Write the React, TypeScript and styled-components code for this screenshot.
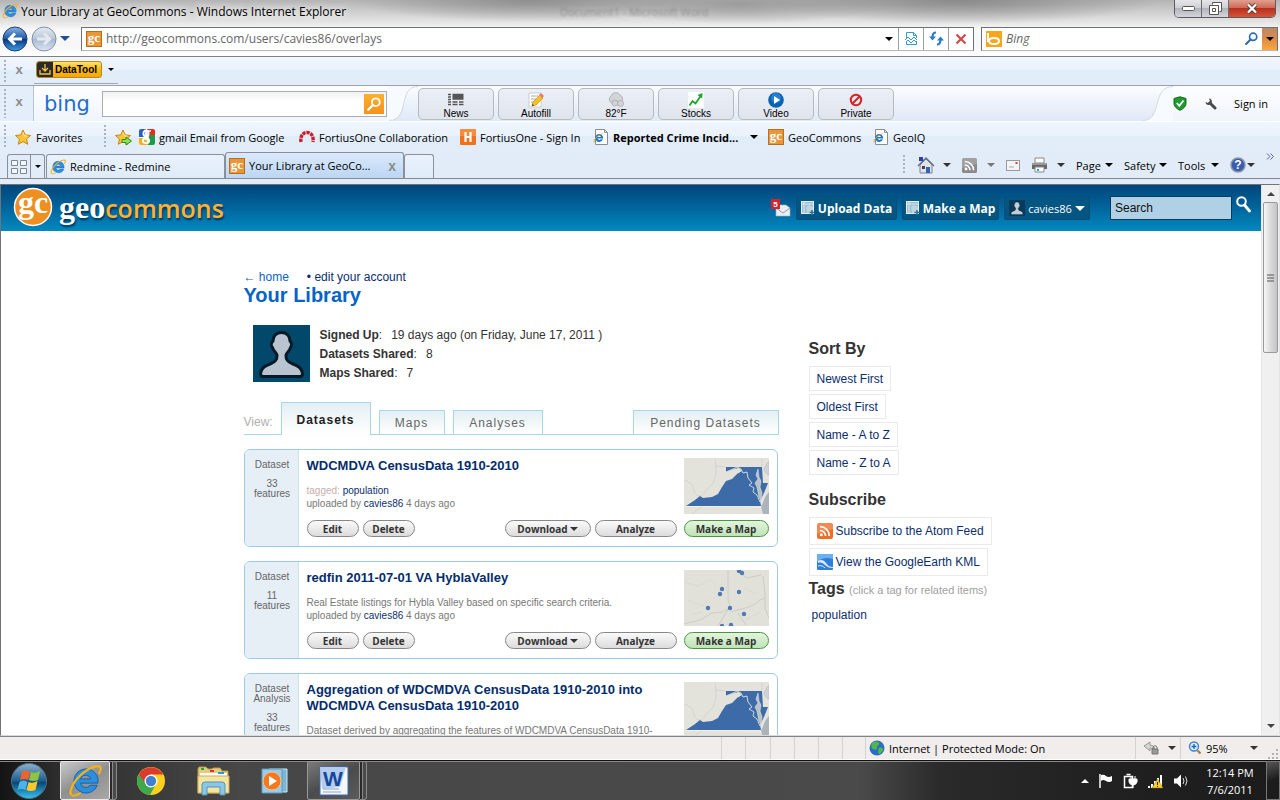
import React from "react";
import styled, { createGlobalStyle, css } from "styled-components";

const ui = `"Open Sans", "Noto Sans", sans-serif`;
const arial = `"Liberation Sans", Arial, sans-serif`;

const Global = createGlobalStyle`
  * { box-sizing: border-box; }
  html, body, #root { height: 100%; margin: 0; }
  body { font-family: ${ui}; font-size: 11px; overflow: hidden; }
  button, input { font: inherit; color: inherit; margin: 0; padding: 0; border: 0; background: none; }
  a { color: inherit; text-decoration: none; }
  h1, h2, h3, p, dl, dd { margin: 0; }
  svg { display: block; flex: none; }
`;

/* ---------- icons ---------- */

const Caret = styled.span<{ $color?: string; $size?: number }>`
  flex: none;
  width: 0;
  height: 0;
  border-left: ${(p) => p.$size ?? 4}px solid transparent;
  border-right: ${(p) => p.$size ?? 4}px solid transparent;
  border-top: ${(p) => p.$size ?? 4}px solid ${(p) => p.$color ?? "#000"};
`;

const IeIcon = ({ size = 16 }: { size?: number }) => (
  <svg width={size} height={size} viewBox="0 0 16 16">
    <path fillRule="evenodd" d="M8.400 2.300a5.700 5.700 0 1 0 5.400 7.700h-3.400a2.500 2.500 0 0 1-4.500-1h8.200A5.700 5.700 0 0 0 8.400 2.300M5.900 7a2.600 2.600 0 0 1 4.900 0z" fill="#2b8fdd" stroke="#14599c" strokeWidth=".4" />
    <path d="M1.600 14.600C.2 13 2.500 8 7 4.300 11 1 14.800.4 15.300 1.700c.3.800-.2 2-.9 3" fill="none" stroke="#f2b21c" strokeWidth="1.100" />
    <path d="M1.600 14.600c1 .7 2.900 0 4.400-1" fill="none" stroke="#f2b21c" strokeWidth=".9" />
  </svg>
);

const IeDoc = () => (
  <svg width="16" height="16" viewBox="0 0 16 16">
    <path d="M2.500.5h9l3 3v12h-12z" fill="#fff" stroke="#8c8c8c" />
    <path d="M11.500.5v3h3" fill="none" stroke="#8c8c8c" />
    <path fillRule="evenodd" d="M6.200 5a4 4 0 1 0 3.800 5.300H7.700a2 2 0 0 1-3.300-.7h5.800A4 4 0 0 0 6.200 5M4.500 8a1.900 1.900 0 0 1 3.500 0z" fill="#1f78c8" />
    <path d="M1 13.500C.5 11 4 6.500 9.500 4.800" fill="none" stroke="#e8a51c" />
  </svg>
);

const GcIcon = () => (
  <svg width="16" height="16" viewBox="0 0 16 16">
    <rect x=".5" y=".5" width="15" height="15" fill="#e8963a" stroke="#b9701d" />
    <text x="8" y="11" textAnchor="middle" fontFamily="Liberation Serif, serif" fontWeight="700" fontSize="13" fill="#fff">gc</text>
  </svg>
);

const Star = ({ arrow }: { arrow?: boolean }) => (
  <svg width="17" height="17" viewBox="0 0 17 17">
    <path d="M8 1l2.200 4.900 5.300.6-4 3.500 1.200 5.300L8 12.600l-4.700 2.700 1.200-5.300-4-3.500 5.300-.6z" fill="#ffc62e" stroke="#c9821a" strokeLinejoin="round" />
    <path d="M8 3.500l1.300 3.200 3 .4" fill="none" stroke="#fff0a8" />
    {arrow && <path d="M7 10.500h4V8l5.500 4-5.500 4v-2.500H7z" fill="#8fe05a" stroke="#2f8f1c" />}
  </svg>
);

const GoogleIcon = () => (
  <svg width="16" height="16" viewBox="0 0 16 16">
    <rect width="16" height="16" rx="2" fill="#fff" />
    <path d="M8 0h6a2 2 0 0 1 2 2v4H9z" fill="#e8291c" />
    <path d="M10 6h6v8a2 2 0 0 1-2 2H9z" fill="#1c9a48" />
    <path d="M0 9h7l2 7H2a2 2 0 0 1-2-2z" fill="#f3b21c" />
    <path d="M0 2a2 2 0 0 1 2-2h5L5 8H0z" fill="#2a62c4" />
    <ellipse cx="7" cy="4.500" rx="2.600" ry="3" fill="none" stroke="#fff" strokeWidth="1.800" />
    <ellipse cx="7" cy="11.800" rx="3.200" ry="2.300" fill="none" stroke="#fff" strokeWidth="1.800" />
    <path d="M9 2h3" stroke="#fff" strokeWidth="1.500" />
  </svg>
);

const RedArc = () => (
  <svg width="16" height="16" viewBox="0 0 16 16">
    <path d="M2 13C1 7 4 3.500 8 3.500S15 7 14 13" fill="none" stroke="#c8202c" strokeWidth="3.400" strokeDasharray="3.300 .8" />
  </svg>
);

const HIcon = () => (
  <svg width="16" height="16" viewBox="0 0 16 16">
    <rect width="16" height="16" rx="1" fill="#f0701c" />
    <path d="M0 0h16v7H0z" fill="#f78d3c" />
    <path d="M5.500 3v10M10.500 3v10M5.500 8h5" stroke="#fff" strokeWidth="2.200" />
  </svg>
);

const Rss = ({ color, size = 16 }: { color: string; size?: number }) => (
  <svg width={size} height={size} viewBox="0 0 16 16">
    <rect width="16" height="16" rx="2" fill={color} />
    <path d="M0 2a2 2 0 0 1 2-2h12a2 2 0 0 1 2 2v4L0 11z" fill="#fff" opacity=".2" />
    <circle cx="4.300" cy="11.700" r="1.500" fill="#fff" />
    <path d="M3 7.500a5.500 5.500 0 0 1 5.500 5.500M3 3.700A9.300 9.300 0 0 1 12.300 13" fill="none" stroke="#fff" strokeWidth="1.700" />
  </svg>
);

const Earth = () => (
  <svg width="16" height="16" viewBox="0 0 16 16">
    <rect width="16" height="16" rx="1" fill="#2f7fd8" />
    <path d="M0 0h16v5Q7 2 0 8z" fill="#6db0ee" />
    <path d="M1 7c3-2 6-1 8 2s4 4 7 4v1c-4 0-6-1-8-3s-4-3-7-2z" fill="#dceaf8" />
    <path d="M1 12c3-1 5 0 7 2" fill="none" stroke="#dceaf8" />
  </svg>
);

const Lens = ({ color, size = 14 }: { color: string; size?: number }) => (
  <svg width={size} height={size} viewBox="0 0 14 14">
    <circle cx="8.800" cy="5.200" r="3.900" fill="none" stroke={color} strokeWidth="1.800" />
    <path d="M6 8l-4.800 4.800" stroke={color} strokeWidth="2.300" strokeLinecap="round" />
  </svg>
);

const NavArrow = ({ forward }: { forward?: boolean }) => (
  <svg width="26" height="26" viewBox="0 0 26 26">
    <defs>
      <linearGradient id={forward ? "nf" : "nb"} x2="0" y2="1">
        <stop offset="0" stopColor={forward ? "#e4eaf2" : "#8ab4e4"} />
        <stop offset=".5" stopColor={forward ? "#b9c6d8" : "#1a56a8"} />
        <stop offset=".52" stopColor={forward ? "#a9b9d0" : "#0a3580"} />
        <stop offset="1" stopColor={forward ? "#dce6f2" : "#3aa0e8"} />
      </linearGradient>
    </defs>
    <circle cx="13" cy="13" r="12" fill={`url(#${forward ? "nf" : "nb"})`} stroke={forward ? "#8492a8" : "#1f3c70"} />
    <path
      d={forward ? "M6 13h12M13 7.500l5.500 5.500-5.500 5.500" : "M20 13H8M13 7.500L7.500 13l5.500 5.500"}
      fill="none" stroke={forward ? "#e3e9f1" : "#fff"} strokeWidth="3" />
  </svg>
);

const PersonShape = ({ size, glow }: { size: number; glow?: boolean }) => (
  <svg width={size} height={size} viewBox="0 0 57 57">
    <rect width="57" height="57" fill={glow ? "#02486b" : "#083a5c"} />
    <path
      d="M28.500 7.500c5.500 0 8.500 4 8.500 8.500 2 2 2 5 .5 6.500-.7 3.500-4 5-4.500 7.500-.3 5 2 7 7 9 6 2 9 5 9.500 9.500 0 2-1 3-3 3h-36c-2 0-3-1-3-3C8 44 11 41 17 39c5-2 7.300-4 7-9-.5-2.500-3.800-4-4.500-7.500-1.500-1.500-1.500-4.500.5-6.500 0-4.500 3-8.500 8.500-8.500z"
      fill={glow ? "#b9c4ce" : "#c3ced6"} stroke="#041a28" strokeWidth={glow ? 3 : 1} />
  </svg>
);

const Virginia = () => (
  <svg width="85" height="56" viewBox="0 0 85 56" role="img" aria-label="Map of Virginia">
    <rect width="85" height="56" fill="#e3e3dc" />
    <path d="M0 22c8 2 10 8 10 12 3 5 8 5 10 1 3-5 8-7 10-12 3-6 2-14 1-23M31 8l11 1M8 56l12-9M78 9V0" fill="none" stroke="#cfcfd2" strokeWidth=".8" />
    <path d="M77 48c3-2 2-8 8-14v22h-6z" fill="#aab4ba" />
    <path d="M80 12c1-4 3-7 5-9v14c-3-1-4-3-5-5z" fill="#cfd3d5" stroke="#b0b5b8" strokeWidth=".5" />
    <path d="M2 48l9-6 5-4 3 2 9-1 6-3 4-7 4-6 6-2 5-5 5-3-3-3-5 1-8 3V9h36l1 16h5l-4 10-4 8 1 5z" fill="#3d6ba8" />
    <path d="M42 14l7-3 4-2 4 2 2 4 4-1 1 6 4 5-3 2 5 3-1 4 4 3 3 7" fill="none" stroke="#dfe2e0" strokeWidth=".9" />
    <path d="M74 11l-2 6 2 4-3 4 2 4 1 5 1 5 2 4 1-8-2-6 1-6-2-4z" fill="#b9c2c6" stroke="#dfe2e0" strokeWidth=".6" />
    <path d="M2 48.500l75 .5" stroke="#f2f2ee" />
  </svg>
);

const Valley = () => (
  <svg width="85" height="56" viewBox="0 0 85 56" role="img" aria-label="Map of Hybla Valley">
    <rect width="85" height="56" fill="#e1e1d9" />
    <path d="M44 0v30l2 6-12 20M46 38l-8 4-10 1-12 7-16 4M46 42c10-3 22-4 30-12l5-2M79 6l2 18v14l4 10M54 43l8 12M55 2l8 6 14-3" fill="none" stroke="#c6c6c4" strokeWidth=".8" />
    <path d="M0 12l14 4 12-6 8 8M4 30l14 6 8-8M60 18l12 6M8 44l10-2M62 50l14-8" fill="none" stroke="#d8d8d1" strokeWidth=".8" />
    {[[55, 1], [58, 3], [38, 19], [36, 24], [55, 22], [24, 38], [46, 38], [60, 44], [38, 56], [47, 55]].map(([x, y]) => (
      <circle key={`${x}-${y}`} cx={x} cy={y} r="2.200" fill="#5078b2" />
    ))}
  </svg>
);

/* ---------- window frame ---------- */

const Window = styled.div`
  height: 100vh;
  display: flex;
  flex-direction: column;
  background: #e1ecf8;
  color: #000;
`;

const Glass = styled.header`
  flex: none;
  height: 57px;
  border-bottom: 1px solid #808080;
  background:
    radial-gradient(ellipse 180px 22px at 530px 0, #8f8f8f, #8f8f8f00),
    radial-gradient(ellipse 200px 24px at 960px 0, #8a8a8a, #8a8a8a00),
    radial-gradient(ellipse 150px 20px at 740px 4px, #9c9c9c, #9c9c9c00),
    linear-gradient(#b4b4b4 0, #cfcfcf 12px, #e4e4e4 22px, #fafafa 30px, #f6f6f6 46px, #ffffff 100%);
`;

const TitleBar = styled.div`
  display: flex;
  align-items: flex-start;
  height: 25px;
  padding: 0 4px 0 2px;
`;

const TitleText = styled.div`
  display: flex;
  align-items: center;
  gap: 3px;
  flex: 1;
  height: 22px;
  white-space: nowrap;
`;

const Halo = styled.span`
  font-size: 12px;
  text-shadow: 0 0 8px #fff, 0 0 8px #fff;
`;

const Ghost = styled.span`
  margin-left: 18%;
  color: #777;
  opacity: 0.6;
  filter: blur(1px);
`;

const WinButtons = styled.div`
  display: flex;
  border: 1px solid #5b5b60;
  border-top: 0;
  border-radius: 0 0 5px 5px;
  overflow: hidden;
`;

const WinButton = styled.button<{ $close?: boolean }>`
  width: ${(p) => (p.$close ? 46 : 27)}px;
  height: 17px;
  display: grid;
  place-items: center;
  border-right: ${(p) => (p.$close ? 0 : 1)}px solid #6b6b70;
  background: ${(p) =>
    p.$close
      ? "linear-gradient(#e0a090, #cf6a55 45%, #b8301c 50%, #d4553a)"
      : "linear-gradient(#e6e6ea, #cfd0d6 45%, #b2b4bc 50%, #d5d6dc)"};
`;

const AddressRow = styled.div`
  display: flex;
  align-items: center;
  height: 27px;
  padding: 0 2px;
`;

const RoundButton = styled.button`
  flex: none;
  margin-right: 3px;
  border-radius: 50%;
`;

const HistoryButton = styled.button`
  display: grid;
  place-items: center start;
  width: 21px;
  height: 24px;
`;

const Field = styled.div<{ $grow?: boolean }>`
  display: flex;
  align-items: center;
  flex: ${(p) => (p.$grow ? "1 1 0" : "0 0 297px")};
  min-width: 0;
  height: 24px;
  margin-left: ${(p) => (p.$grow ? 0 : 7)}px;
  padding-left: 4px;
  gap: 4px;
  border: 1px solid #6c7078;
  border-bottom-color: #b4b8be;
  background: #fff;
`;

const UrlInput = styled.input`
  flex: 1;
  min-width: 0;
  color: #666;
  font-size: 12px;
  outline: 0;
  &::placeholder { color: #666; font-style: italic; opacity: 1; }
`;

const FieldButton = styled.button<{ $plain?: boolean; $orange?: boolean }>`
  display: grid;
  place-items: center;
  flex: none;
  width: ${(p) => (p.$plain ? 18 : p.$orange ? 15 : 25)}px;
  height: 22px;
  border-left: ${(p) => (p.$plain || p.$orange ? 0 : 1)}px solid #9a9ea6;
  ${(p) => p.$orange && css`background: linear-gradient(#b98a66, #e08a4a 50%, #f8a83c);`}
`;

const AddressTail = styled.div`
  display: flex;
`;

/* ---------- toolbars ---------- */

const Grip = styled.span`
  flex: none;
  align-self: stretch;
  width: 3px;
  margin: 3px 0 3px 4px;
  background: radial-gradient(circle at 1px 1px, #a9b2bd 1px, #fff0 1px) 0 0 / 3px 4px;
`;

const CloseX = styled.button`
  flex: none;
  width: 24px;
  text-align: center;
  color: #8b8b8b;
  font: bold 13px/14px ${arial};
  padding-bottom: 3px;
`;

const Toolbar = styled.div<{ $h: number }>`
  flex: none;
  display: flex;
  align-items: center;
  height: ${(p) => p.$h}px;
  background: linear-gradient(#f0f6fe, #e9f1fb 45%, #e0ecf8 50%, #e2edf9);
`;

const DataToolWrap = styled.div`
  display: flex;
  align-items: center;
  gap: 6px;
  height: 26px;
  margin-left: 3px;
  padding: 0 4px 3px 2px;
  border-bottom: 1px solid #a4a8ae;
`;

const DataToolButton = styled.button`
  display: flex;
  align-items: center;
  gap: 2px;
  width: 66px;
  height: 17px;
  border-radius: 3px;
  border: 1px solid #b58a1c;
  overflow: hidden;
  background: linear-gradient(#ffe070, #fdb813 50%, #f7a600);
  font: bold 10px ${arial};
  white-space: nowrap;
`;

const BingBar = styled.div`
  flex: none;
  display: flex;
  align-items: stretch;
  height: 37px;
  border-top: 1px solid #9ba3ac;
  border-bottom: 1px solid #fff;
  background: linear-gradient(#fcfdff, #eef3fb 45%, #dfe9f6);
`;

const BingLead = styled.div`
  display: flex;
  align-items: center;
  width: 34px;
  background: #e3eefa;
  border-right: 1px solid #b9c4d1;
`;

const BingPanel = styled.div`
  display: flex;
  align-items: center;
  padding-left: 10px;
  background: linear-gradient(#fdfeff, #f0f5fc);
`;

const BingLogo = styled.span`
  width: 58px;
  color: #1c6fd0;
  font: 21px/26px "DejaVu Sans", ${arial};
`;

const BingSearch = styled.div`
  display: flex;
  align-items: center;
  width: 285px;
  height: 26px;
  padding: 0 2px;
  border: 1px solid #a9adb3;
  background: linear-gradient(#f1f1f1, #fff 40%);
  input { flex: 1; min-width: 0; outline: 0; }
`;

const OrangeSearch = styled.button`
  display: grid;
  place-items: center;
  width: 20px;
  height: 20px;
  background: linear-gradient(#fbb12c, #f7901e);
`;

const BingButtons = styled.div`
  display: flex;
  align-items: center;
  gap: 4px;
  flex: 1;
`;

const BingButton = styled.button`
  display: flex;
  flex-direction: column;
  align-items: center;
  width: 76px;
  height: 32px;
  padding-top: 3px;
  border: 1px solid #b6bac2;
  border-radius: 5px;
  background: linear-gradient(#eceff5, #dfe4ee);
  font: 10px/11px ${arial};
`;

const BingRight = styled.div`
  display: flex;
  align-items: center;
  gap: 17px;
  padding-right: 12px;
  background: linear-gradient(#fdfeff, #f0f5fc);
`;

const FavLink = styled.a<{ $w: number; $bold?: boolean }>`
  display: flex;
  align-items: center;
  flex: none;
  gap: 4px;
  width: ${(p) => p.$w}px;
  white-space: nowrap;
  font-weight: ${(p) => (p.$bold ? 700 : 400)};
`;

const FavButton = styled(FavLink).attrs({ as: "button" })`
  padding-left: 8px;
`;

const TabRow = styled.div`
  flex: none;
  display: flex;
  align-items: flex-end;
  height: 27px;
  border-bottom: 1px solid #868a90;
  background: #e1ecf8;
`;

const QuickTabs = styled.div`
  display: flex;
  margin: 0 1px 0 7px;
  border: 1px solid #8a9099;
  border-bottom: 0;
  border-radius: 3px 3px 0 0;
  button { display: grid; place-items: center; height: 23px; width: 22px; }
  button + button { width: 14px; border-left: 1px solid #8a9099; }
`;

const BrowserTab = styled.button<{ $active?: boolean; $w?: number }>`
  display: flex;
  align-items: center;
  gap: 4px;
  width: ${(p) => p.$w ?? 179}px;
  height: ${(p) => (p.$active ? 26 : 24)}px;
  padding: 0 7px 0 3px;
  border: 1px solid #8a9099;
  border-bottom: 0;
  border-radius: 3px 3px 0 0;
  background: ${(p) => (p.$active ? "linear-gradient(#dbe9fb, #bcd6f5)" : "linear-gradient(#e9f2fc, #dfebf8)")};
  white-space: nowrap;
  b { margin-left: auto; color: #8b8b8b; font: bold 14px ${arial}; }
`;

const CommandBar = styled.div`
  display: flex;
  align-items: center;
  align-self: stretch;
  margin-left: auto;
  padding-right: 4px;
`;

const Command = styled.button<{ $w: number; $top?: boolean }>`
  display: flex;
  align-items: center;
  align-self: ${(p) => (p.$top ? "flex-start" : "auto")};
  justify-content: space-between;
  flex: none;
  width: ${(p) => p.$w}px;
  margin-left: 11px;
`;

/* ---------- web page ---------- */

const Viewport = styled.main`
  flex: 1;
  min-height: 0;
  display: flex;
  margin-top: 5px;
  border: 1px solid #707478;
  border-right-color: #e4e4e4;
  border-bottom-color: #d8d8d8;
  background: #fff;
`;

const Page = styled.div`
  flex: 1;
  min-width: 0;
  overflow: hidden;
  color: #333;
  font-family: ${arial};
  font-size: 12px;
`;

const SiteHeader = styled.div`
  display: flex;
  align-items: center;
  height: 46px;
  padding: 0 10px 0 12px;
  background: linear-gradient(#01467b, #016299 45%, #0089bf);
`;

const Brand = styled.a`
  display: flex;
  align-items: center;
  gap: 6px;
  margin-right: auto;
  padding-bottom: 2px;
`;

const Wordmark = styled.span`
  color: #ffb133;
  font: 600 25px/30px "Open Sans", sans-serif;
  text-shadow: 1px 2px 2px #00305a;
  b { color: #fff; font: bold 32px/30px "Liberation Serif", serif; }
`;

const HeaderButton = styled.button<{ $w: number; $small?: boolean }>`
  display: flex;
  align-items: center;
  justify-content: center;
  gap: 3px;
  width: ${(p) => p.$w}px;
  height: 24px;
  margin-left: 5px;
  border: 1px solid #0a4d78;
  border-radius: 2px;
  background: #045682;
  color: #fff;
  font: ${(p) => (p.$small ? `11px ${ui}` : `bold 12px ${ui}`)};
  white-space: nowrap;
`;

const SiteSearch = styled.form`
  display: flex;
  align-items: flex-start;
  gap: 4px;
  margin-left: 20px;
  input {
    width: 122px;
    height: 24px;
    padding: 0 4px;
    border: 1px solid #0a3c60;
    background: #b0d0e6;
    color: #111;
    font: 12px ${arial};
    &::placeholder { color: #111; opacity: 1; }
  }
`;

const Content = styled.div`
  display: flex;
  gap: 30px;
  max-width: 775px;
  margin: 0 auto;
  padding-top: 38px;
`;

const MainCol = styled.section`
  flex: 0 1 535px;
  min-width: 0;
`;

const Crumbs = styled.nav`
  display: flex;
  gap: 18px;
  line-height: 16px;
  color: #0b2e6b;
  a:first-child { color: #0b62c8; }
`;

const PageTitle = styled.h1`
  color: #0663c8;
  font-size: 20px;
  line-height: 20px;
`;

const Profile = styled.div`
  display: flex;
  gap: 10px;
  margin: 20px 0 0 9px;
`;

const Facts = styled.dl`
  padding-top: 1px;
  line-height: 19px;
  div { display: flex; }
  dt { font-weight: bold; }
  dt::after { content: ":"; font-weight: normal; }
  dd { padding-left: 9px; }
`;

const ViewTabs = styled.nav`
  display: flex;
  align-items: flex-end;
  height: 33px;
  margin-top: 19px;
  border-bottom: 1px solid #a6d8ea;
  color: #b0b0b0;
`;

const ViewLabel = styled.span`
  width: 37px;
  line-height: 24px;
`;

const ViewTab = styled.a<{ $w: number; $active?: boolean; $end?: boolean }>`
  width: ${(p) => p.$w}px;
  height: 24px;
  margin: ${(p) => (p.$end ? "0 0 0 auto" : "0 8px 0 0")};
  border: 1px solid #a6d8ea;
  border-bottom: 0;
  background: linear-gradient(#e4eff3, #fff);
  color: #666;
  text-align: center;
  letter-spacing: 1px;
  line-height: 25px;
  ${(p) =>
    p.$active &&
    css`
      height: 33px;
      margin-bottom: -1px;
      line-height: 34px;
      font-weight: bold;
      color: #222;
    `}
`;

const Card = styled.article`
  display: flex;
  min-height: 98px;
  margin: 14px 1px 0 0;
  border: 1px solid #9ccbe8;
  border-radius: 6px;
  overflow: hidden;
  font-size: 10px;
  line-height: 13px;
  color: #777;
  a { color: #0b2e6b; }
`;

const Kind = styled.div`
  flex: 0 0 54px;
  padding: 10px 0 0 2px;
  border-right: 1px solid #cfe2f0;
  background: #e6eff6;
  color: #666;
  line-height: 10px;
  text-align: center;
  p + p { margin-top: 9px; }
`;

const CardBody = styled.div`
  flex: 1;
  display: flex;
  flex-direction: column;
  padding: 8px 8px 9px;
`;

const CardTop = styled.div`
  display: flex;
  justify-content: space-between;
  flex: 1;
`;

const CardTitle = styled.h3`
  margin-bottom: 10px;
  color: #052d6b;
  font-size: 13px;
  line-height: 16px;
`;

const Tagged = styled.span`
  color: #c8b0aa;
`;

const Actions = styled.div`
  display: flex;
  gap: 4px;
  margin-top: 6px;
`;

const Pill = styled.button<{ $w: number; $green?: boolean; $push?: boolean }>`
  display: flex;
  align-items: center;
  justify-content: center;
  gap: 2px;
  width: ${(p) => p.$w}px;
  height: 17px;
  margin-left: ${(p) => (p.$push ? "auto" : p.$green ? "3px" : 0)};
  border: 1px solid ${(p) => (p.$green ? "#4c9440" : "#888")};
  border-radius: 9px;
  background: ${(p) => (p.$green ? "linear-gradient(#e2f5dc, #bfe3b8)" : "linear-gradient(#fafafa, #dcdcdc)")};
  color: #333;
  font: bold 10px/14px ${ui};
`;

const SideCol = styled.aside`
  padding-top: 70px;
`;

const SideTitle = styled.h2`
  font-size: 16px;
  line-height: 20px;
  small { color: #a0a0a0; font-size: 11px; font-weight: normal; }
`;

const SideList = styled.ul<{ $tight?: boolean }>`
  display: flex;
  flex-direction: column;
  align-items: flex-start;
  gap: 3px;
  margin: 7px 0 ${(p) => (p.$tight ? 3 : 15)}px;
  padding: 0;
  list-style: none;
`;

const SideLink = styled.a<{ $tall?: boolean }>`
  display: flex;
  align-items: center;
  gap: 3px;
  height: ${(p) => (p.$tall ? 28 : 25)}px;
  padding: 0 7px;
  border: 1px solid #eaeaea;
  color: #0b2e6b;
  white-space: nowrap;
`;

const TagLink = styled.a`
  display: block;
  padding: 7px 3px;
  color: #0b2e6b;
  line-height: 16px;
`;

const ScrollTrack = styled.div`
  display: flex;
  flex-direction: column;
  align-items: center;
  justify-content: space-between;
  width: 18px;
  padding: 7px 0;
  border-left: 1px solid #e6e6e6;
  background: #f0f0f0;
`;

const ScrollThumb = styled.div`
  display: grid;
  place-items: center;
  width: 15px;
  height: 151px;
  margin: 6px 0 auto;
  border: 1px solid #9a9a9a;
  border-radius: 2px;
  background: linear-gradient(90deg, #f6f6f6, #dadada 50%, #c4c4c8);
`;

const UpCaret = styled(Caret)`
  transform: rotate(180deg);
`;

/* ---------- status bar and taskbar ---------- */

const StatusBar = styled.footer`
  flex: none;
  display: flex;
  align-items: stretch;
  justify-content: flex-end;
  height: 24px;
  border-top: 1px solid #808488;
  border-bottom: 1px solid #fff;
  background: #f0edec;
`;

const StatusCell = styled.div<{ $w: number }>`
  display: flex;
  align-items: center;
  gap: 4px;
  width: ${(p) => p.$w}px;
  padding-left: 3px;
  border-left: 1px solid #d5d2d2;
  white-space: nowrap;
`;

const Spread = styled(StatusCell)`
  justify-content: space-between;
  padding: 0 4px 0 7px;
`;

const Taskbar = styled.nav`
  flex: none;
  display: flex;
  align-items: stretch;
  height: 40px;
  border-top: 1px solid #111;
  box-shadow: inset 0 1px #8a8a8a;
  background: linear-gradient(90deg, #141414, #2e2e2e 60px, #474747 240px, #4a4a4a 860px, #2a2a2a 940px, #222 1080px, #1b1b1b);
  color: #fff;
`;

const TaskButton = styled.button<{ $w: number; $state?: "active" | "open" }>`
  display: grid;
  place-items: center;
  width: ${(p) => p.$w}px;
  border-radius: 2px;
  ${(p) =>
    p.$state &&
    css`
      border: 1px solid ${p.$state === "active" ? "#e8e8e8" : "#999"};
      background: ${p.$state === "active"
        ? "linear-gradient(150deg, #c9c9c9, #8f8f8f 50%, #a8a8a8)"
        : "linear-gradient(150deg, #7a7a7a, #4b4b4b 50%, #5c5c5c)"};
    `}
`;

const StackEdge = styled.span`
  width: 7px;
  margin-right: 1px;
  border: solid #8a8a8a;
  border-width: 1px 1px 1px 0;
  border-radius: 0 3px 3px 0;
  background: linear-gradient(90deg, #2a2a2a 2px, #8a8a8a 2px, #8a8a8a 3px, #4a4a4a 3px);
`;

const Tray = styled.div`
  display: flex;
  align-items: center;
  margin-left: auto;
`;

const TrayIcons = styled.div`
  display: flex;
  align-items: center;
  gap: 9px;
  margin-right: 5px;
`;

const Clock = styled.time`
  width: 72px;
  text-align: center;
  line-height: 17px;
`;

const ShowDesktop = styled.button`
  align-self: stretch;
  width: 14px;
  border: 1px solid #777;
  background: linear-gradient(160deg, #555, #1c1c1c 50%);
`;

/* ---------- data ---------- */

const bingButtons: [string, React.ReactNode][] = [
  ["News", <path key="n" d="M0 2.500h3M0 5h3M0 7.500h3M0 10h3M0 12.500h3M4.500 10h5M4.500 12.500h5M11 10h4.500M11 12.500h4.500M4.500 2.500h11M4.500 4h11M4.500 5.500h11M4.500 7h11" stroke="#555" strokeWidth="1.500" />],
  ["Autofill", <g key="a"><path d="M1 1h12v14H1z" fill="#fff" stroke="#ccc" /><path d="M3 4h7M3 7h5M3 10h3" stroke="#aaa" /><path d="M4 14l1-4 7-7 3 3-7 7z" fill="#f8c21c" stroke="#b98212" strokeWidth=".6" /><path d="M11 3l2-2 3 3-2 2z" fill="#ee7a6a" /><path d="M4 14l.6-2 1.400 1.400z" fill="#222" /></g>],
  ["82°F", <g key="w" fill="#d3d4d7" stroke="#a6a8ac" strokeWidth=".8"><path d="M4 11a4 4 0 0 1-1-7 5 5 0 0 1 9-1 4 4 0 0 1 1 7z" /><circle cx="7" cy="11" r="3" /><circle cx="12.500" cy="11.500" r="3" /></g>],
  ["Stocks", <g key="s"><path d="M0 0h16v16H0z" fill="#fff" /><path d="M1.500 13.500l3-4.500 3 2.500 5.500-8" fill="none" stroke="#1aa82c" strokeWidth="1.800" /><path d="M9.500 3l5-2-.3 5.400z" fill="#1aa82c" /></g>],
  ["Video", <g key="v"><circle cx="8" cy="8" r="7.800" fill="#0a62b4" /><circle cx="8" cy="6" r="5" fill="#3795dc" opacity=".6" /><path d="M6 4l6 4-6 4z" fill="#fff" /></g>],
  ["Private", <g key="p"><circle cx="8" cy="8" r="7.500" fill="#e7e8ea" /><circle cx="8" cy="8" r="5.200" fill="none" stroke="#d2232a" strokeWidth="2" /><path d="M4.500 11.500l7-7" stroke="#d2232a" strokeWidth="2" /></g>],
];

type CardData = { kind: string[]; count: number; title: string; body: React.ReactNode; map: React.ReactNode };

const By = () => (
  <p>uploaded by <a href="#user">cavies86</a> 4 days ago</p>
);

const cards: CardData[] = [
  {
    kind: ["Dataset"], count: 33, title: "WDCMDVA CensusData 1910-2010", map: <Virginia />,
    body: <><p><Tagged>tagged:</Tagged> <a href="#population">population</a></p><By /></>,
  },
  {
    kind: ["Dataset"], count: 11, title: "redfin 2011-07-01 VA HyblaValley", map: <Valley />,
    body: <><p>Real Estate listings for Hybla Valley based on specific search criteria.</p><By /></>,
  },
  {
    kind: ["Dataset", "Analysis"], count: 33, title: "Aggregation of WDCMDVA CensusData 1910-2010 into WDCMDVA CensusData 1910-2010", map: <Virginia />,
    body: <><p>Dataset derived by aggregating the features of WDCMDVA CensusData 1910-2010</p><By /></>,
  },
];

const Thumb = styled.div`
  flex: none;
  margin-left: 16px;
`;

const DatasetCard = ({ kind, count, title, body, map }: CardData) => (
  <Card>
    <Kind>
      <p>{kind.map((k) => <React.Fragment key={k}>{k}<br /></React.Fragment>)}</p>
      <p>{count}<br />features</p>
    </Kind>
    <CardBody>
      <CardTop>
        <div>
          <CardTitle>{title}</CardTitle>
          {body}
        </div>
        <Thumb>{map}</Thumb>
      </CardTop>
      <Actions>
        <Pill $w={52}>Edit</Pill>
        <Pill $w={52}>Delete</Pill>
        <Pill $w={86} $push>Download<Caret $color="#333" /></Pill>
        <Pill $w={82}>Analyze</Pill>
        <Pill $w={85} $green>Make a Map</Pill>
      </Actions>
    </CardBody>
  </Card>
);

const MapGlyph = () => (
  <svg width="14" height="14" viewBox="0 0 14 14">
    <rect x=".5" y=".5" width="12" height="12" fill="#9cc0d2" stroke="#e6f0f5" />
    <path d="M1 3h11M3 1v11" stroke="#dbe9f0" fill="none" />
    <path d="M5 6l3-2 4 2v6H6z" fill="#bcd6e2" />
    <path d="M11 9v5M8.500 11.500h5" stroke="#2f6f92" strokeWidth="1.500" />
  </svg>
);

/* ---------- app ---------- */

export default function App() {
  return (
    <Window>
      <Global />
      <Glass>
        <TitleBar>
          <TitleText>
            <IeIcon />
            <Halo>Your Library at GeoCommons - Windows Internet Explorer</Halo>
            <Ghost aria-hidden="true">Document1 - Microsoft Word</Ghost>
          </TitleText>
          <WinButtons>
            <WinButton aria-label="Minimize"><svg width="13" height="6"><rect x=".5" y=".5" width="12" height="4" rx="1" fill="#fff" stroke="#555" /></svg></WinButton>
            <WinButton aria-label="Restore"><svg width="13" height="13"><path d="M3.500 2.500v-2h9v9h-2M.5 3.500h9v9h-9zM3.500 6.500h3v3h-3z" fill="#fff" stroke="#555" /></svg></WinButton>
            <WinButton $close aria-label="Close"><svg width="12" height="11"><path d="M2 1.500l8 8M10 1.500l-8 8" stroke="#5a3a38" strokeWidth="4" /><path d="M2 1.500l8 8M10 1.500l-8 8" stroke="#fff" strokeWidth="2.300" /></svg></WinButton>
          </WinButtons>
        </TitleBar>
        <AddressRow>
          <RoundButton aria-label="Back"><NavArrow /></RoundButton>
          <RoundButton aria-label="Forward"><NavArrow forward /></RoundButton>
          <HistoryButton aria-label="Recent pages"><Caret $color="#1c4e90" $size={5} /></HistoryButton>
          <Field $grow>
            <GcIcon />
            <UrlInput aria-label="Address" defaultValue="http://geocommons.com/users/cavies86/overlays" />
            <AddressTail>
              <FieldButton $plain aria-label="Show address list"><Caret /></FieldButton>
              <FieldButton aria-label="Compatibility view"><svg width="13" height="15" viewBox="0 0 13 15"><path d="M1.500 7V1.500h7l3 3V7M1.500 10v3.500h10V10M8.500 1.500v3h3M0 9l3-3 3 3 3-3 3 3M1 11l2-2 3 3 3-3 3 3" fill="none" stroke="#3a9ac8" /></svg></FieldButton>
              <FieldButton aria-label="Refresh"><svg width="15" height="15" viewBox="0 0 15 15"><path d="M7 1.500C4 1.500 3.500 3.500 3.500 6M8 13.500c3 0 3.500-2 3.500-5" fill="none" stroke="#2a7cc4" strokeWidth="2.200" /><path d="M0 5.500h7L3.500 9.500zM8 9.500h7L11.500 5.500z" fill="#2a7cc4" /></svg></FieldButton>
              <FieldButton aria-label="Stop"><svg width="12" height="12"><path d="M1.500 1.500l9 9M10.500 1.500l-9 9" stroke="#d04a4a" strokeWidth="2.200" /></svg></FieldButton>
            </AddressTail>
          </Field>
          <Field>
            <svg width="16" height="16"><rect width="16" height="16" fill="#f9a61c" /><path d="M2 2v9M3 10c0-4 10-4 10 0s-10 4-10 0z" fill="none" stroke="#fff" strokeWidth="2" /></svg>
            <UrlInput aria-label="Bing search" placeholder="Bing" />
            <Lens color="#2a6cb8" size={13} />
            <FieldButton $orange aria-label="Search options"><Caret /></FieldButton>
          </Field>
        </AddressRow>
      </Glass>

      <Toolbar $h={28}>
        <Grip />
        <CloseX aria-label="Close toolbar">x</CloseX>
        <DataToolWrap>
          <DataToolButton>
            <svg width="16" height="17"><rect width="16" height="17" fill="#2a2a2a" /><path d="M8 3v7M5 7l3 3 3-3M3 9v4h10V9" fill="none" stroke="#f5c542" strokeWidth="1.300" /></svg>
            DataTool
          </DataToolButton>
          <Caret $size={3} />
        </DataToolWrap>
      </Toolbar>

      <BingBar>
        <BingLead><Grip /><CloseX aria-label="Close Bing bar">x</CloseX></BingLead>
        <BingPanel>
          <BingLogo>bing</BingLogo>
          <BingSearch>
            <input aria-label="Search the web" />
            <OrangeSearch aria-label="Search"><Lens color="#fff" /></OrangeSearch>
          </BingSearch>
        </BingPanel>
        <svg width="31" height="35"><path d="M0 0h31C10 0 24 35 0 35z" fill="#f7faff" /><path d="M31 .5C10 .5 24 34 2 34.500" fill="none" stroke="#d3d9e2" /></svg>
        <BingButtons>
          {bingButtons.map(([label, icon]) => (
            <BingButton key={label}><svg width="16" height="16" viewBox="0 0 16 16">{icon}</svg>{label}</BingButton>
          ))}
        </BingButtons>
        <svg width="30" height="35"><path d="M30 0C8 0 20 35 0 35h30z" fill="#f7faff" /><path d="M30 .5C8 .5 20 34 0 34.500" fill="none" stroke="#d3d9e2" /></svg>
        <BingRight>
          <svg width="14" height="15" viewBox="0 0 14 15"><path d="M7 .8l6 1.700v5c0 3-3 5.500-6 6.800-3-1.300-6-3.800-6-6.800v-5z" fill="#1e9a30" stroke="#0f6a1c" /><path d="M3.800 7l2.500 2.800 4.200-5.300" fill="none" stroke="#fff" strokeWidth="1.800" /></svg>
          <svg width="13" height="13" viewBox="0 0 13 13"><path d="M6 6l5 5" stroke="#4a4a4a" strokeWidth="3" strokeLinecap="round" /><path d="M5 1.500a3.200 3.200 0 1 1-3.500 3.500L4 6l2-2z" fill="#4a4a4a" /></svg>
          <a href="#signin">Sign in</a>
        </BingRight>
      </BingBar>

      <Toolbar $h={30}>
        <Grip />
        <FavButton $w={93}><Star />Favorites</FavButton>
        <Grip />
        <FavButton $w={32} aria-label="Add to favorites bar"><Star arrow /></FavButton>
        <FavLink href="#gmail" $w={160}><GoogleIcon />gmail Email from Google</FavLink>
        <FavLink href="#fortius" $w={161}><RedArc />FortiusOne Collaboration</FavLink>
        <FavLink href="#signin" $w={133}><HIcon />FortiusOne - Sign In</FavLink>
        <FavLink href="#crime" $w={175} $bold><IeDoc />Reported Crime Incid...<span /><span /><Caret /></FavLink>
        <FavLink href="#geocommons" $w={105}><GcIcon />GeoCommons</FavLink>
        <FavLink href="#geoiq" $w={70}><IeDoc />GeoIQ</FavLink>
      </Toolbar>

      <TabRow>
        <QuickTabs>
          <button aria-label="Quick tabs"><svg width="16" height="14"><path d="M.5.5h6v5h-6zM9.500.5h6v5h-6zM.5 8.500h6v5h-6zM9.500 8.500h6v5h-6z" fill="#f4f8fd" stroke="#7c8694" /></svg></button>
          <button aria-label="Tab list"><Caret $size={3} /></button>
        </QuickTabs>
        <BrowserTab><IeIcon />Redmine - Redmine</BrowserTab>
        <BrowserTab $active><GcIcon />Your Library at GeoCo...<b>x</b></BrowserTab>
        <BrowserTab $w={30} aria-label="New tab" />
        <CommandBar>
          <Grip />
          <Command $w={34} aria-label="Home">
            <svg width="18" height="18" viewBox="0 0 18 18"><path d="M3 9v8h12V9L9 3z" fill="#dfe4ec" stroke="#7a8290" /><path d="M1 10l8-8 8 8" fill="none" stroke="#6a7384" strokeWidth="1.500" /><path d="M2 1h4v4H2z" fill="#2a3ec4" /><path d="M9 11h4v6H9z" fill="#3a62b0" /><path d="M5 10h3v3H5z" fill="#445" /></svg>
            <Caret $color="#333" />
          </Command>
          <Command $w={33} aria-label="Feeds"><Rss color="#8a8a8a" size={15} /><Caret $color="#777" /></Command>
          <Command $w={14} aria-label="Read mail"><svg width="14" height="11"><rect x=".5" y=".5" width="13" height="10" fill="#f4f4f4" stroke="#9a9a9a" /><path d="M3 7h5" stroke="#aaa" /><path d="M9.500 2h2v2h-2z" fill="#c44" /></svg></Command>
          <Command $w={34} aria-label="Print">
            <svg width="17" height="16" viewBox="0 0 17 16"><path d="M4 1h9v5H4z" fill="#fff" stroke="#888" /><path d="M1 6h15v6H1z" fill="#666" /><path d="M1 6h15v2H1z" fill="#999" /><path d="M4 10h9v5H4z" fill="#fff" stroke="#888" /><path d="M6 12h2v2H6z" fill="#2ac" /></svg>
            <Caret $color="#333" />
          </Command>
          <Command $w={37}>Page<Caret /></Command>
          <Command $w={43}>Safety<Caret /></Command>
          <Command $w={41}>Tools<Caret /></Command>
          <Command $w={25} aria-label="Help">
            <svg width="16" height="16"><circle cx="8" cy="8" r="7" fill="#3a5cb0" stroke="#8a93a8" strokeWidth="1.500" /><text x="8" y="12" textAnchor="middle" fontFamily="Liberation Sans, sans-serif" fontWeight="700" fontSize="12" fill="#fff">?</text></svg>
            <Caret $color="#333" />
          </Command>
          <Command $w={10} $top aria-label="More">
            <svg width="8" height="9"><path d="M1 1.500l3 3-3 3M4.500 1.500l3 3-3 3" fill="none" stroke="#5560a0" /></svg>
          </Command>
        </CommandBar>
      </TabRow>

      <Viewport>
        <Page>
          <SiteHeader>
            <Brand href="#home">
              <svg width="40" height="40" viewBox="0 0 40 40"><circle cx="20" cy="20" r="18.500" fill="#ee8f22" stroke="#fff" strokeWidth="1.500" /><text x="20" y="26" textAnchor="middle" fontFamily="Liberation Serif, serif" fontWeight="700" fontSize="32" fill="#fff">gc</text></svg>
              <Wordmark><b>geo</b>commons</Wordmark>
            </Brand>
            <svg width="20" height="18" viewBox="0 0 20 18"><path d="M5 6h10l4 3v8H5z" fill="#e8eef2" stroke="#9fb4c2" strokeWidth=".6" /><path d="M5 9l7 5 7-5" fill="none" stroke="#8aa2b2" /><rect width="9" height="10" fill="#d8232a" /><text x="4.500" y="8" textAnchor="middle" fontFamily="Liberation Sans, sans-serif" fontSize="8" fontWeight="700" fill="#fff">5</text></svg>
            <HeaderButton $w={101}><MapGlyph />Upload Data</HeaderButton>
            <HeaderButton $w={97}><MapGlyph />Make a Map</HeaderButton>
            <HeaderButton $w={86} $small><PersonShape size={16} />cavies86<Caret $color="#fff" $size={5} /></HeaderButton>
            <SiteSearch>
              <input aria-label="Search" placeholder="Search" />
              <button aria-label="Go" type="button"><svg width="15" height="17" viewBox="0 0 15 17"><circle cx="5.500" cy="5.500" r="4.300" fill="none" stroke="#fff" strokeWidth="2" /><path d="M8.500 9l5 6" stroke="#fff" strokeWidth="2.800" strokeLinecap="round" /></svg></button>
            </SiteSearch>
          </SiteHeader>

          <Content>
            <MainCol>
              <Crumbs><a href="#home">← home</a><a href="#account">• edit your account</a></Crumbs>
              <PageTitle>Your Library</PageTitle>
              <Profile>
                <PersonShape size={57} glow />
                <Facts>
                  <div><dt>Signed Up</dt><dd>19 days ago (on Friday, June 17, 2011 )</dd></div>
                  <div><dt>Datasets Shared</dt><dd>8</dd></div>
                  <div><dt>Maps Shared</dt><dd>7</dd></div>
                </Facts>
              </Profile>
              <ViewTabs>
                <ViewLabel>View:</ViewLabel>
                <ViewTab href="#datasets" $w={90} $active>Datasets</ViewTab>
                <ViewTab href="#maps" $w={66}>Maps</ViewTab>
                <ViewTab href="#analyses" $w={90}>Analyses</ViewTab>
                <ViewTab href="#pending" $w={146} $end>Pending Datasets</ViewTab>
              </ViewTabs>
              {cards.map((c) => <DatasetCard key={c.title} {...c} />)}
            </MainCol>
            <SideCol>
              <SideTitle>Sort By</SideTitle>
              <SideList>
                {["Newest First", "Oldest First", "Name - A to Z", "Name - Z to A"].map((s) => (
                  <li key={s}><SideLink href="#sort">{s}</SideLink></li>
                ))}
              </SideList>
              <SideTitle>Subscribe</SideTitle>
              <SideList $tight>
                <li><SideLink href="#atom" $tall><Rss color="#ee6f28" />Subscribe to the Atom Feed</SideLink></li>
                <li><SideLink href="#kml" $tall><Earth />View the GoogleEarth KML</SideLink></li>
              </SideList>
              <SideTitle>Tags <small>(click a tag for related items)</small></SideTitle>
              <TagLink href="#population">population</TagLink>
            </SideCol>
          </Content>
        </Page>
        <ScrollTrack>
          <UpCaret $color="#444" />
          <ScrollThumb><svg width="7" height="8"><path d="M0 1h7M0 4h7M0 7h7" stroke="#555" /></svg></ScrollThumb>
          <Caret $color="#444" />
        </ScrollTrack>
      </Viewport>

      <StatusBar>
        {[24, 25, 24, 24, 24, 23].map((w, i) => <StatusCell key={i} $w={w} />)}
        <StatusCell $w={270}>
          <svg width="16" height="16"><circle cx="8" cy="8" r="7.500" fill="#2a6fc0" /><path d="M3 3c3-2 6-2 7 0s-3 3-2 5-4 2-5 0-1-3 0-5zM10 8c2-1 5 0 4 2s-3 5-4 4-1-5 0-6z" fill="#52b848" /></svg>
          Internet | Protected Mode: On
        </StatusCell>
        <Spread $w={45}>
          <svg width="17" height="16" viewBox="0 0 17 16"><path d="M1 6l6-4v3q4 0 5 4l-5-1v3z" fill="#d5d5d5" stroke="#999" /><path d="M9 9h6v5H9z" fill="#999" stroke="#777" /><path d="M10 9V7q2-3 4 0v2" fill="none" stroke="#777" /></svg>
          <Caret $color="#333" />
        </Spread>
        <StatusCell $w={70}>
          <span />
          <svg width="14" height="14" viewBox="0 0 14 14"><circle cx="6" cy="5.500" r="4.500" fill="#e4f0fc" stroke="#3a84d0" strokeWidth="1.400" /><path d="M6 3v5M3.500 5.500h5" stroke="#1c64c0" strokeWidth="1.400" /><path d="M9.500 9.500l3 3" stroke="#b07a3c" strokeWidth="2.200" /></svg>
          95%
        </StatusCell>
        <svg width="30" height="22"><path d="M0 9h8l-4 4z" fill="#333" /><path d="M26 13h2M22 17h2M26 17h2M18 21h2M22 21h2M26 21h2" stroke="#b5b2b2" strokeWidth="2" /></svg>
      </StatusBar>

      <Taskbar>
        <TaskButton $w={60} aria-label="Start">
          <svg width="38" height="38" viewBox="0 0 38 38">
            <defs><linearGradient id="orb" x2="0" y2="1"><stop offset="0" stopColor="#8fb2cc" /><stop offset=".5" stopColor="#1c5c8c" /><stop offset=".55" stopColor="#0a4672" /><stop offset="1" stopColor="#38c4f4" /></linearGradient></defs>
            <circle cx="18" cy="19" r="17.500" fill="url(#orb)" stroke="#48748f" />
            <path d="M11 10q4-3 8 0l-2 8q-4-2-8 0z" fill="#f0642c" /><path d="M20 10q4 2 9-1l-2 9q-5 2-9 0z" fill="#8cc63e" />
            <path d="M8.500 20q4-3 8 0l-2 8q-4-2-8 0z" fill="#4ab4ea" /><path d="M17.500 20q4 2 9-1l-2 9q-5 2-9 0z" fill="#fcc82c" />
          </svg>
        </TaskButton>
        <TaskButton $w={50} $state="active" aria-label="Internet Explorer"><IeIcon size={34} /></TaskButton>
        <StackEdge />
        <TaskButton $w={66} aria-label="Chrome">
          <svg width="30" height="30" viewBox="0 0 30 30"><circle cx="15" cy="15" r="14" fill="#fcd01c" /><path d="M2.900 8A14 14 0 0 0 14 29l6-11-5-3z" fill="#3ea84c" /><path d="M2.900 8A14 14 0 0 1 27.100 8.500H15L9.400 18z" fill="#dc3a2c" /><circle cx="15" cy="15" r="6.500" fill="#fff" /><circle cx="15" cy="15" r="5.200" fill="#4080d0" /></svg>
        </TaskButton>
        <TaskButton $w={58} aria-label="Explorer">
          <svg width="34" height="32" viewBox="0 0 34 32"><path d="M2 4l1-2h7l2 2h4l1-1h7l2 3h6v22H2z" fill="#e4cc7c" stroke="#b8984a" /><path d="M4 8h27v4H4z" fill="#fff" /><path d="M5 3h3v2H5z" fill="#2a2" /><path d="M14 5h4v2h-4z" fill="#d33" /><path d="M22 7h6v2h-6z" fill="#29d" /><path d="M2 11h31v17H2z" fill="#f6e4a0" stroke="#c9ac5c" /><path d="M6 30V20q0-3 3-3h17q3 0 3 3v10h-5v-8H11v8z" fill="#8cc8e6" stroke="#4a96bc" /></svg>
        </TaskButton>
        <TaskButton $w={65} aria-label="Media Player">
          <svg width="28" height="28" viewBox="0 0 28 28"><path d="M8 2h18v23H8z" fill="#7ab6d6" stroke="#cfe8f5" /><path d="M1 2h20v24H1z" fill="#9accea" stroke="#5a9cc0" /><circle cx="11" cy="14" r="9" fill="#f37a1c" stroke="#fbc08c" /><path d="M8 9l8 5-8 5z" fill="#fff" /></svg>
        </TaskButton>
        <TaskButton $w={53} $state="open" aria-label="Word">
          <svg width="32" height="32" viewBox="0 0 32 32"><path d="M2 2h28v28H2z" fill="#f4f8fd" stroke="#3a6cb4" /><path d="M2 2l26 0-6 20L4 24z" fill="#b4cdec" /><text x="15" y="21" textAnchor="middle" fontFamily="Liberation Sans, sans-serif" fontWeight="700" fontSize="21" fill="#15479c">W</text><path d="M5 24h16M5 27h18" stroke="#8fa6c8" /></svg>
        </TaskButton>
        <StackEdge />
        <Tray>
          <TrayIcons>
            <UpCaret $color="#fff" />
            <svg width="16" height="16"><path d="M2 1v14" stroke="#fff" strokeWidth="1.500" /><path d="M3 2q3-1 5 1t6 0v5q-3 2-6 0T3 8z" fill="#fff" /></svg>
            <svg width="15" height="16"><path d="M1.500 3.500h8v11h-8zM3.500 1.500h4" fill="none" stroke="#fff" strokeWidth="1.500" /><path d="M6 6h8v3q-1 3-4 3T6 9zM8 3v3M12 3v3M10 12v3" fill="#fff" stroke="#fff" /></svg>
            <svg width="17" height="16"><path d="M1 13h2v2H1zM4 11h2v4H4zM7 8h2v7H7zM10 5h2v10h-2zM13 2h2v13h-2z" fill="#fff" /><path d="M10.500 6l5.500 9H5z" fill="#f8d02c" stroke="#8a6d0c" strokeWidth=".5" /><path d="M10.500 9v3M10.500 13v1" stroke="#222" /></svg>
            <svg width="16" height="16"><path d="M1 5.500h3l4-4v13l-4-4H1z" fill="#fff" /><path d="M10 5q2 3 0 6M12.500 3.500q3 4.500 0 9" fill="none" stroke="#ddd" /></svg>
          </TrayIcons>
          <Clock>12:14 PM<br />7/6/2011</Clock>
          <ShowDesktop aria-label="Show desktop" />
        </Tray>
      </Taskbar>
    </Window>
  );
}
